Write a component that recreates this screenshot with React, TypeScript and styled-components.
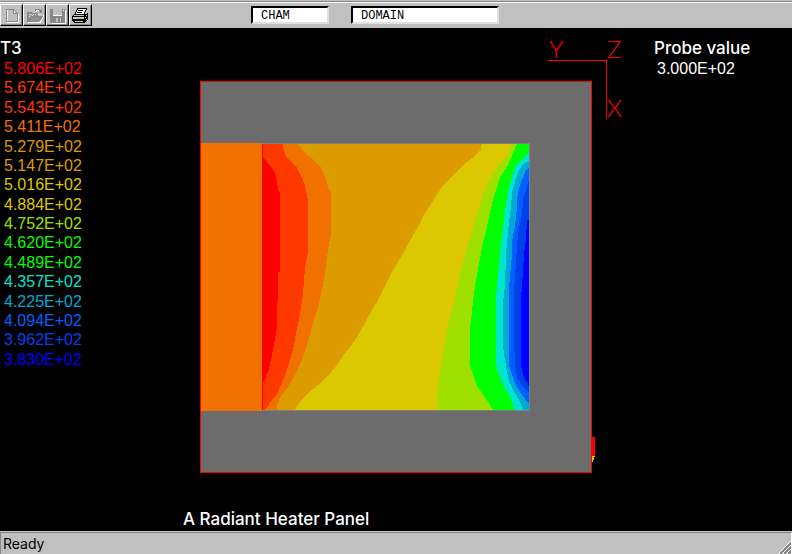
import React from 'react';
import styled, { createGlobalStyle } from 'styled-components';

const GlobalStyle = createGlobalStyle`
  * { box-sizing: border-box; }
  body { margin: 0; background: #000; }
`;

const Page = styled.div`
  display: flex;
  flex-direction: column;
  min-height: 100vh;
  background: #000;
  color: #fff;
  font: 16px/20px 'Liberation Sans', Arial, sans-serif;
`;

const Toolbar = styled.header`
  display: flex;
  align-items: flex-start;
  height: 28px;
  padding-top: 1px;
  background: #c0c0c0;
`;

const ToolbarInner = styled.div`
  display: flex;
  flex: 1;
  border-top: 1px solid #868686;
  box-shadow: inset 0 1px 0 #fff;
  padding-top: 2px;
`;

const ToolButtons = styled.div`
  display: flex;
  width: 251px;
`;

const ToolButton = styled.button`
  width: 23px;
  height: 22px;
  padding: 0;
  border: 1px solid;
  border-color: #fff #000 #000 #fff;
  background: #c0c0c0;
  box-shadow: inset -1px -1px 0 #868686;
  svg { display: block; }
`;

const Field = styled.input<{ $width: number }>`
  width: ${(p) => p.$width}px;
  height: 18px;
  margin: 2px 22px 0 0;
  padding: 2px 0 0 8px;
  border: 2px solid;
  border-color: #000 #e0e0e0 #e0e0e0 #000;
  border-radius: 0;
  outline: 0;
  background: #fff;
  color: #000;
  font: 12px/12px 'Liberation Mono', 'Courier New', monospace;
`;

const Viewport = styled.main`
  display: grid;
  grid-template-columns: 183px minmax(0, 1fr) 138px;
  flex: 1;
`;

const Readout = styled.section`
  padding-top: 10px;
`;

const Label = styled.h2`
  margin: 0;
  font: 500 17px/20px Inter, sans-serif;
`;

const Levels = styled.ul`
  display: grid;
  grid-template-rows: repeat(16, minmax(0, 1fr));
  height: 310px;
  margin: 1px 0 0;
  padding: 0 0 0 4px;
  list-style: none;
`;

const Level = styled.li<{ $color: string }>`
  color: ${(p) => p.$color};
`;

const Figure = styled.figure`
  margin: 0;
`;

const Drawing = styled.svg`
  display: block;
  width: calc(100% - 47px);
  height: auto;
  margin-left: 17px;
`;

const Caption = styled.figcaption`
  margin-top: 34px;
  font: 500 17px/20px Inter, sans-serif;
`;

const ProbeValue = styled.output`
  display: block;
  padding: 1px 0 0 3px;
`;

const StatusBar = styled.footer`
  display: flex;
  height: 23px;
  padding-top: 1px;
  background: #c0c0c0;
  color: #000;
`;

const StatusPane = styled.div`
  display: flex;
  flex: 1;
  justify-content: space-between;
  border-top: 1px solid #868686;
  border-left: 1px solid #868686;
  border-right: 1px solid #fff;
  padding-left: 2px;
  font: 14px/21px Inter, sans-serif;
`;

const levels: [string, string][] = [
  ['5.806E+02', '#ff0000'],
  ['5.674E+02', '#ff3800'],
  ['5.543E+02', '#ff3800'],
  ['5.411E+02', '#f07000'],
  ['5.279E+02', '#dc9c00'],
  ['5.147E+02', '#dc9c00'],
  ['5.016E+02', '#dcc800'],
  ['4.884E+02', '#dcc800'],
  ['4.752E+02', '#a0e000'],
  ['4.620E+02', '#00ff00'],
  ['4.489E+02', '#00ff00'],
  ['4.357E+02', '#00e4d0'],
  ['4.225E+02', '#00a8d4'],
  ['4.094E+02', '#0060ff'],
  ['3.962E+02', '#0040ec'],
  ['3.830E+02', '#0000ff'],
];

/* Left edge of each temperature band, top to bottom; every band fills to the right wall. */
const bands: { color: string; edge: string }[] = [
  { color: '#ff3800', edge: '263,144 263,158 266,161 271,167 275,173 277,182 279,192 280,192 280,272 278,272 278,303 277,303 277,326 275,340 273,350 269,370 263,383 263,410' },
  { color: '#f07000', edge: '283,144 283,147 286,157 290,161 297,168 301,176 305,185 307,195 308,200 308,253 305,268 303,294 300,315 298,325 296,333 294,345 290,360 286,373 281,385 277,394 272,400 267,407 265,410' },
  { color: '#dc9c00', edge: '298,144 304,152 310,157 321,168 325,177 328,187 331,192 331,233 328,250 325,273 322,290 318,307 311,330 307,345 302,360 295,375 288,387 281,396 277,405 277,410' },
  { color: '#dcc800', edge: '482,144 481,149 472,158 461,167 452,176 444,184 438,193 431,204 425,213 419,225 412,237 405,250 392,272 377,302 372,310 365,323 357,337 350,347 343,356 337,365 328,376 318,385 308,393 300,401 296,408 295,410' },
  { color: '#a0e000', edge: '512,144 507,157 500,163 494,172 488,183 483,195 480,205 475,218 472,232 468,245 465,255 459,277 455,300 450,318 447,332 444,350 441,365 438,383 437,397 438,410' },
  { color: '#00ff00', edge: '517,144 513,153 508,165 500,177 497,188 493,200 490,212 487,227 483,242 481,253 476,280 473,300 472,312 470,328 470,365 473,375 477,386 482,393 488,402 493,410' },
  { color: '#00e4d0', edge: '529,152 525,157 519,162 515,167 512,177 509,188 507,198 505,212 503,228 501,243 500,255 498,275 496,298 496,362 498,372 502,382 507,392 512,400 514,410' },
  { color: '#00a8d4', edge: '529,161 523,164 518,172 515,182 512,192 511,208 509,222 507,242 506,255 505,285 503,303 503,347 505,360 508,378 513,390 520,402 523,410' },
  { color: '#0060ff', edge: '529,167 526,170 523,178 520,185 517,198 517,208 515,225 512,242 512,255 509,287 509,365 512,375 515,383 520,392 525,399 529,404' },
  { color: '#0040ec', edge: '529,180 526,190 523,200 522,215 519,228 517,245 516,263 514,290 514,343 515,363 517,378 523,386 529,393' },
  { color: '#0000ff', edge: '529,220 527,220 526,240 524,253 523,273 521,298 521,365 523,375 529,386' },
];

function NewIcon() {
  return (
    <svg width="20" height="19" shapeRendering="crispEdges" fill="none" aria-hidden="true">
      <path d="M6 16.500h11.500v-9M6.500 4v11M13.500 4v3h3" stroke="#fff" />
      <path d="M5.500 3.500h7l4 4v8h-11zM12.500 3.500v4h4" stroke="#868686" />
    </svg>
  );
}

function OpenIcon() {
  return (
    <svg width="20" height="19" shapeRendering="crispEdges" fill="none" aria-hidden="true">
      <path d="M4 16.500h12l4-7M12 5.500l1-1h3" stroke="#fff" />
      <path d="M3 6h4l1 1h6v3h5l-4 6H3z" fill="#909090" />
      <path d="M3.500 15.500v-9h3l1 1h6v3M3.500 15.500l4-5h11l-4 5zM11 4.500l1-1h3l2 2M17.500 3v3h-3" stroke="#868686" />
      <path d="M5 8.500h1M7 8.500h1M9 8.500h1M11 8.500h1M6 9.500h1M8 9.500h1M5 10.500h1M14 8.500h3" stroke="#e0e0e0" />
    </svg>
  );
}

function SaveIcon() {
  return (
    <svg width="20" height="19" shapeRendering="crispEdges" aria-hidden="true">
      <path d="M4 4h15v14H5l-1-1z" fill="#fff" />
      <path d="M3 3h15v14H4l-1-1z" fill="#868686" />
      <path d="M6 3h9v7H6zM9 12h5v4H9z" fill="#c0c0c0" />
      <path d="M11 12h2v4h-2z" fill="#868686" />
      <path d="M6 9h9v1H6zM16 4h1v1h-1z" fill="#fff" />
    </svg>
  );
}

function PrintIcon() {
  return (
    <svg width="20" height="19" shapeRendering="crispEdges" aria-hidden="true">
      <path d="M7.500 2.500h9l-3 7h-9z" fill="#fff" stroke="#000" />
      <path d="M8 4.500h5M7 6.500h5" stroke="#000" />
      <path d="M2 10l3-2h11l2-1v7l-4 3H4l-2-2z" fill="#000" />
      <path d="M4 9h10v1H4zM3 11h11v2H3zM5 15h8v1H5zM16 9h1v1h-1zM15 11h1v1h-1zM16 13h1v1h-1z" fill="#c8c8c8" />
      <path d="M9 12h4v1H9z" fill="#e0d800" />
    </svg>
  );
}

function HeaterPlot() {
  return (
    <Drawing viewBox="200 28 424 447" role="img" aria-label="Temperature contours with axes">
      <g shapeRendering="crispEdges">
        <rect x="200.500" y="81.500" width="391" height="391" fill="#6c6c6c" stroke="#f00" />
        <path d="M262 143.500h267.500v267H262" fill="none" stroke="#808080" />
        <rect x="201" y="143" width="61" height="268" fill="#f07000" />
        <rect x="262" y="144" width="267" height="266" fill="#f00" />
        {bands.map((b) => (
          <polygon key={b.color} points={`${b.edge} 529,410 529,144`} fill={b.color} />
        ))}
        <path d="M592 437h3v19h-3z" fill="#f00" />
        <path d="M592 456h3v1h-1v3h-1v2h-1z" fill="#dcc800" />
        <path d="M548 60.500h58.500V119" fill="none" stroke="#f00" />
      </g>
      <g fill="#f00" fontFamily="Lato, sans-serif" fontWeight="300" fontSize="24">
        <text x="549" y="58">Y</text>
        <text x="607" y="58">Z</text>
        <text x="607" y="117">X</text>
      </g>
    </Drawing>
  );
}

function SizeGrip() {
  return (
    <svg width="14" height="21" aria-hidden="true" shapeRendering="crispEdges">
      <path d="M1 21L14 8M5 21L14 12M9 21L14 16" stroke="#fff" />
      <path d="M3 21L14 10M7 21L14 14M11 21L14 18" stroke="#868686" strokeWidth="2" />
    </svg>
  );
}

const tools = [
  { name: 'New', Icon: NewIcon },
  { name: 'Open', Icon: OpenIcon },
  { name: 'Save', Icon: SaveIcon },
  { name: 'Print', Icon: PrintIcon },
];

export default function App() {
  return (
    <Page>
      <GlobalStyle />
      <Toolbar>
        <ToolbarInner>
          <ToolButtons>
            {tools.map(({ name, Icon }) => (
              <ToolButton key={name} type="button" aria-label={name}>
                <Icon />
              </ToolButton>
            ))}
          </ToolButtons>
          <Field $width={78} aria-label="Object name" defaultValue="CHAM" />
          <Field $width={148} aria-label="Object type" defaultValue="DOMAIN" />
        </ToolbarInner>
      </Toolbar>
      <Viewport>
        <Readout>
          <Label>T3</Label>
          <Levels>
            {levels.map(([value, color]) => (
              <Level key={value} $color={color}>{value}</Level>
            ))}
          </Levels>
        </Readout>
        <Figure>
          <HeaterPlot />
          <Caption>A Radiant Heater Panel</Caption>
        </Figure>
        <Readout>
          <Label>Probe value</Label>
          <ProbeValue>3.000E+02</ProbeValue>
        </Readout>
      </Viewport>
      <StatusBar>
        <StatusPane>
          <span role="status">Ready</span>
          <SizeGrip />
        </StatusPane>
      </StatusBar>
    </Page>
  );
}
